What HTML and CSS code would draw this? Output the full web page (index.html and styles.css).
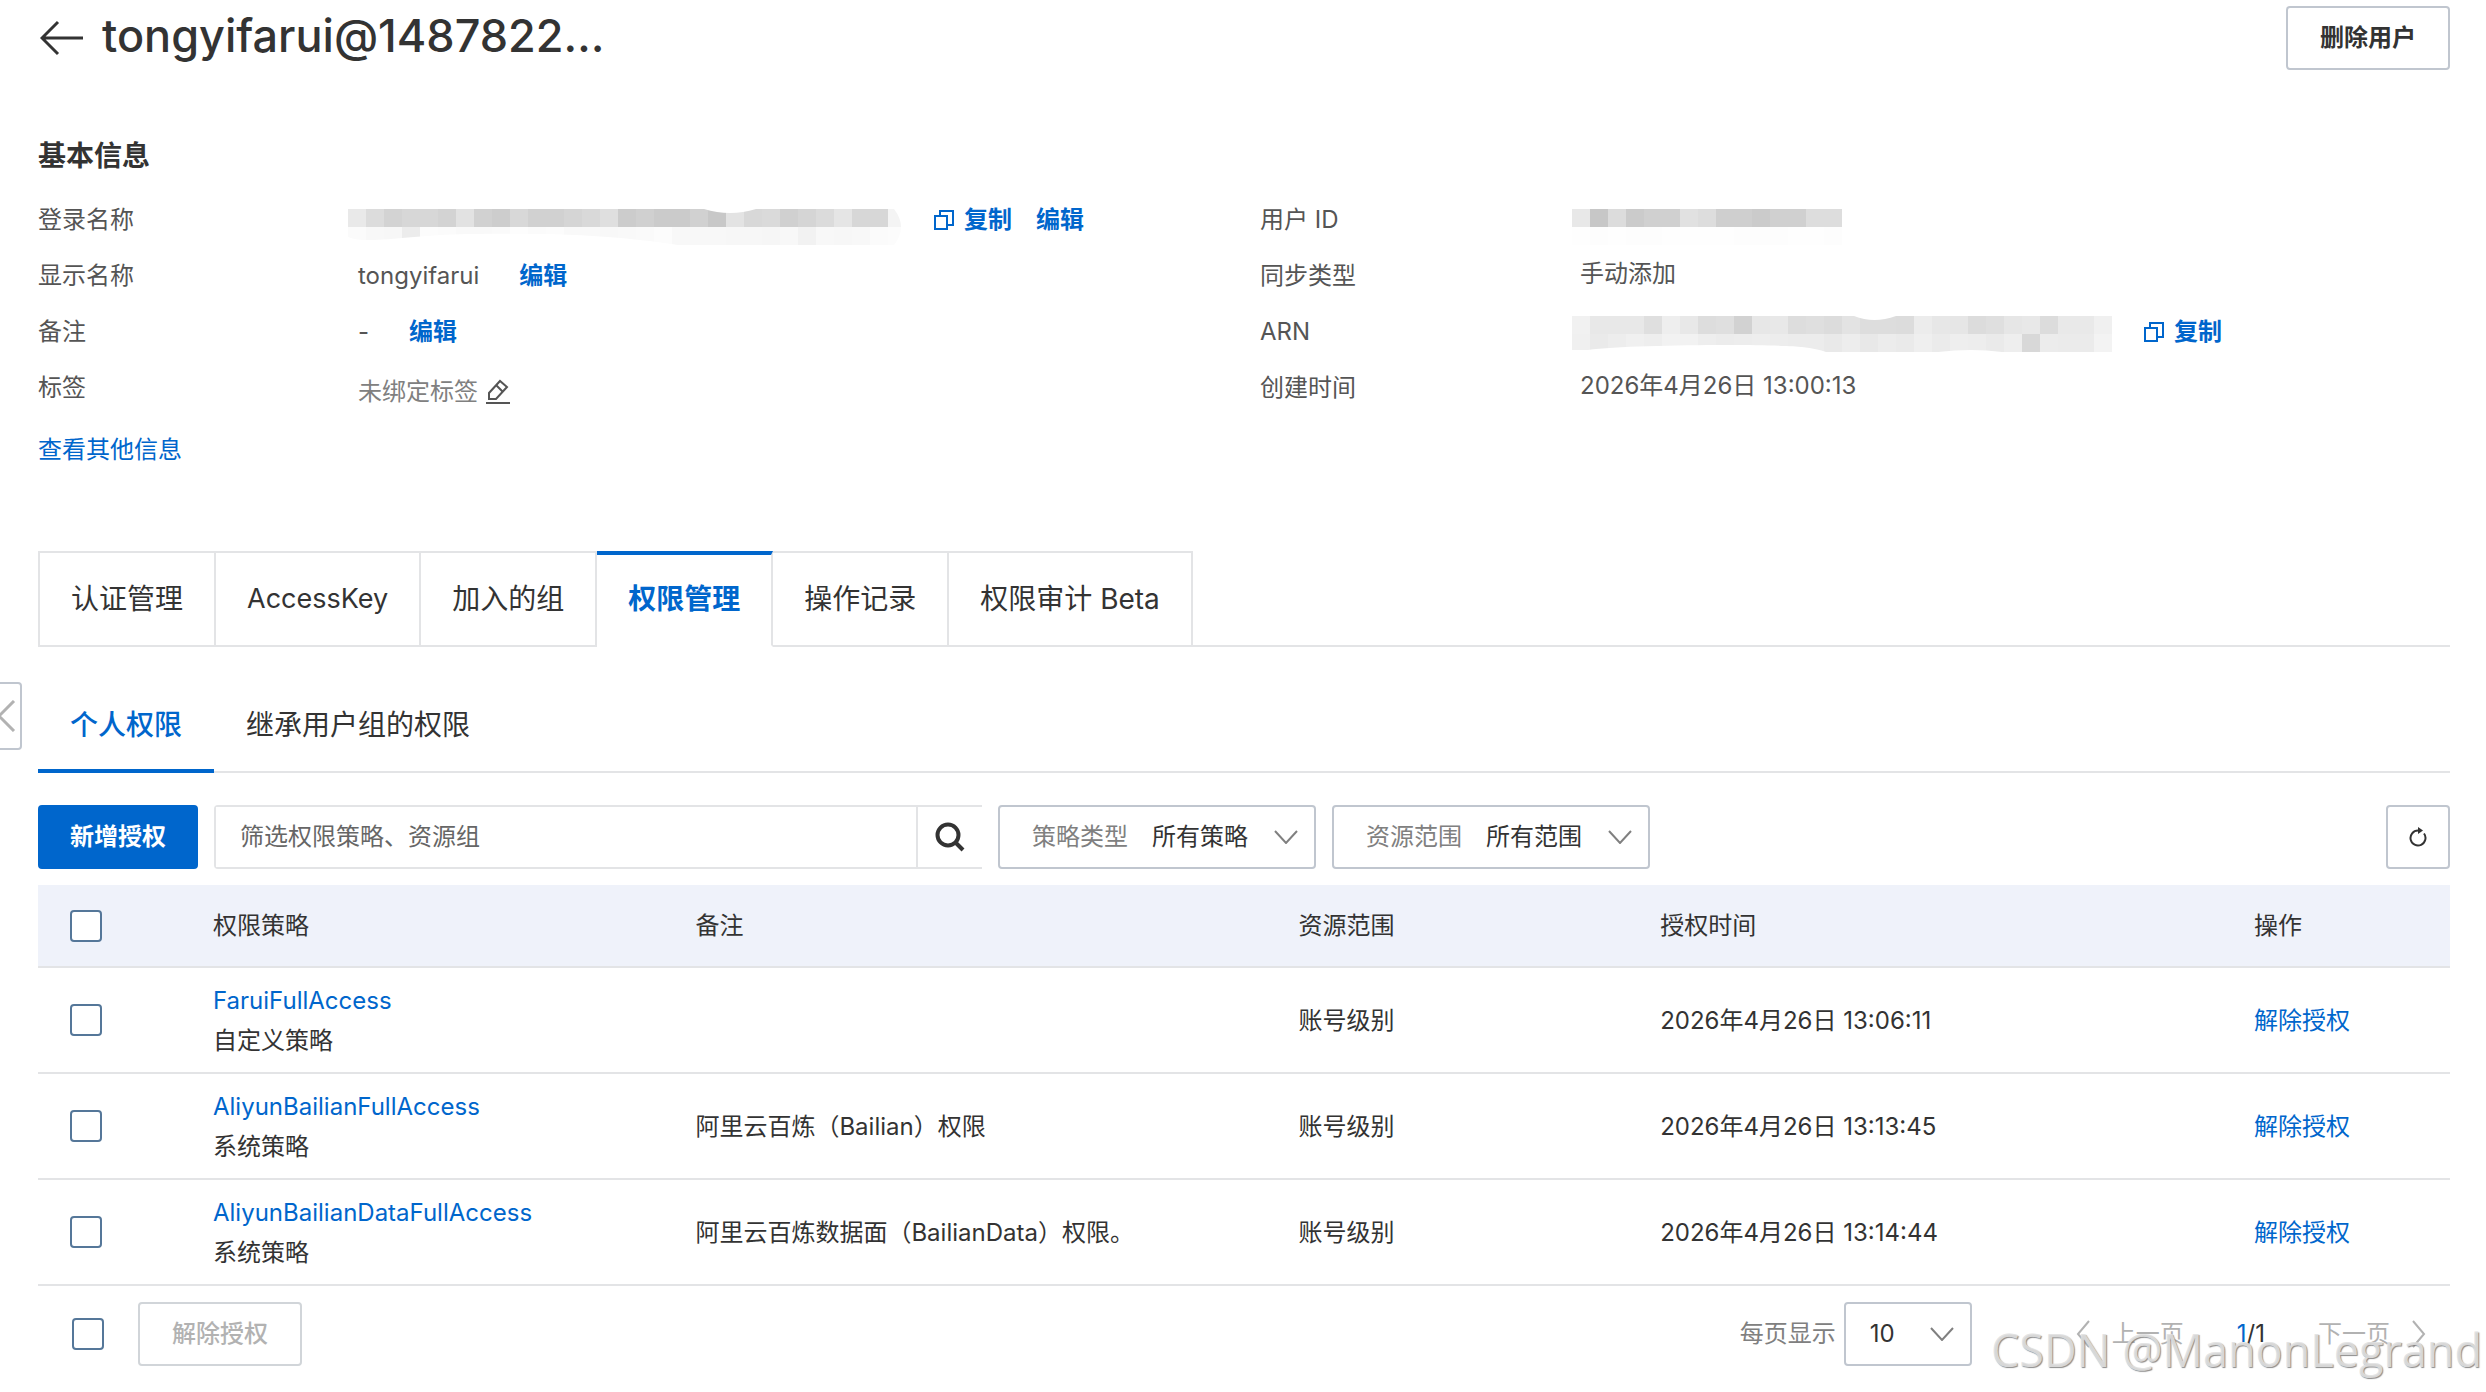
FILE: index.html
```html
<!DOCTYPE html>
<html lang="zh-CN">
<head>
    <meta charset="UTF-8">
    <meta name="viewport" content="width=device-width, initial-scale=1.0">
    <title>tongyifarui</title>
    <link rel="stylesheet" href="styles.css">
</head>
<body>

<button type="button" class="collapser" aria-label="收起">
    <svg width="20" height="32" viewBox="0 0 20 32"><path d="M14 1 L-1 16 L14 31"/></svg>
</button>

<div class="page">

    <!-- Page header -->
    <header class="page-header">
        <a href="#" class="back" aria-label="返回">
            <svg width="44" height="36" viewBox="0 0 44 36"><path d="M43 18H3M18 2L2 18L18 34"/></svg>
        </a>
        <h1>tongyifarui@1487822…</h1>
        <button type="button" class="btn">删除用户</button>
    </header>

    <!-- Basic info -->
    <section>
        <h2>基本信息</h2>
        <div class="info">
            <dl>
                <div class="info-row">
                    <dt>登录名称</dt>
                    <dd>
                        <svg class="mosaic low" id="login-mosaic" width="556" height="36"></svg>
                        <a href="#" class="copy"><svg width="20" height="20" viewBox="0 0 20 20"><path d="M1 6H13V19H1ZM6 6V1H19V15H13"/></svg>复制</a>
                        <a href="#" class="edit">编辑</a>
                    </dd>
                </div>
                <div class="info-row">
                    <dt>显示名称</dt>
                    <dd>tongyifarui <a href="#" class="edit wide">编辑</a></dd>
                </div>
                <div class="info-row">
                    <dt>备注</dt>
                    <dd>- <a href="#" class="edit wide">编辑</a></dd>
                </div>
                <div class="info-row">
                    <dt>标签</dt>
                    <dd class="tags">
                        未绑定标签
                        <button type="button" class="pencil" aria-label="编辑标签">
                            <svg width="24" height="26" viewBox="0 0 24 26"><path d="M3 20V14L14 2L21 8L10 20ZM10 6L17 13M0 24H24"/></svg>
                        </button>
                    </dd>
                </div>
            </dl>
            <dl class="right">
                <div class="info-row">
                    <dt>用户 ID</dt>
                    <dd><svg class="mosaic low" id="uid-mosaic" width="270" height="36"></svg></dd>
                </div>
                <div class="info-row">
                    <dt>同步类型</dt>
                    <dd class="plain">手动添加</dd>
                </div>
                <div class="info-row">
                    <dt>ARN</dt>
                    <dd>
                        <svg class="mosaic" id="arn-mosaic" width="540" height="36"></svg>
                        <a href="#" class="copy"><svg width="20" height="20" viewBox="0 0 20 20"><path d="M1 6H13V19H1ZM6 6V1H19V15H13"/></svg>复制</a>
                    </dd>
                </div>
                <div class="info-row">
                    <dt>创建时间</dt>
                    <dd class="plain">2026年4月26日 13:00:13</dd>
                </div>
            </dl>
        </div>
        <a href="#" class="more">查看其他信息</a>
    </section>

    <!-- Main tabs -->
    <nav class="tabs">
        <a href="#">认证管理</a>
        <a href="#" class="latin">AccessKey</a>
        <a href="#">加入的组</a>
        <a href="#" class="active">权限管理</a>
        <a href="#">操作记录</a>
        <a href="#">权限审计 Beta</a>
    </nav>

    <nav class="subtabs">
        <a href="#" class="active">个人权限</a>
        <a href="#">继承用户组的权限</a>
    </nav>

    <!-- Filters -->
    <div class="toolbar">
        <button type="button" class="btn primary">新增授权</button>
        <form class="search">
            <input type="text" placeholder="筛选权限策略、资源组" aria-label="筛选权限策略、资源组">
            <button type="submit" aria-label="搜索">
                <svg width="30" height="30" viewBox="0 0 30 30"><circle cx="13" cy="13" r="10.5"/><path d="M20 20L28 28"/></svg>
            </button>
        </form>
        <div class="select">
            <label for="policy-type">策略类型</label>
            <select id="policy-type"><option>所有策略</option></select>
            <svg width="24" height="14" viewBox="0 0 24 14"><path d="M1 1L12 13L23 1"/></svg>
        </div>
        <div class="select">
            <label for="scope">资源范围</label>
            <select id="scope"><option>所有范围</option></select>
            <svg width="24" height="14" viewBox="0 0 24 14"><path d="M1 1L12 13L23 1"/></svg>
        </div>
        <button type="button" class="btn refresh" aria-label="刷新">
            <svg width="20" height="20" viewBox="0 0 20 20"><path d="M16 6.5A7.5 7.5 0 1 1 10 3.5"/><path class="tip" d="M10 0V7L15 3.5Z"/></svg>
        </button>
    </div>

    <!-- Permission list -->
    <table>
        <colgroup>
            <col class="col-check"><col class="col-policy"><col class="col-note"><col class="col-scope"><col><col class="col-action">
        </colgroup>
        <thead>
            <tr>
                <th><input type="checkbox" aria-label="全选"></th>
                <th>权限策略</th>
                <th>备注</th>
                <th>资源范围</th>
                <th>授权时间</th>
                <th>操作</th>
            </tr>
        </thead>
        <tbody>
            <tr>
                <td><input type="checkbox" aria-label="FaruiFullAccess"></td>
                <td><a href="#">FaruiFullAccess</a><br>自定义策略</td>
                <td></td>
                <td>账号级别</td>
                <td>2026年4月26日 13:06:11</td>
                <td><a href="#">解除授权</a></td>
            </tr>
            <tr>
                <td><input type="checkbox" aria-label="AliyunBailianFullAccess"></td>
                <td><a href="#">AliyunBailianFullAccess</a><br>系统策略</td>
                <td>阿里云百炼（Bailian）权限</td>
                <td>账号级别</td>
                <td>2026年4月26日 13:13:45</td>
                <td><a href="#">解除授权</a></td>
            </tr>
            <tr>
                <td><input type="checkbox" aria-label="AliyunBailianDataFullAccess"></td>
                <td><a href="#">AliyunBailianDataFullAccess</a><br>系统策略</td>
                <td>阿里云百炼数据面（BailianData）权限。</td>
                <td>账号级别</td>
                <td>2026年4月26日 13:14:44</td>
                <td><a href="#">解除授权</a></td>
            </tr>
        </tbody>
    </table>

    <!-- Batch actions and paging -->
    <footer class="list-footer">
        <input type="checkbox" aria-label="全选">
        <button type="button" class="btn" disabled>解除授权</button>
        <label class="size-label" for="page-size">每页显示</label>
        <div class="select size">
            <select id="page-size"><option>10</option></select>
            <svg width="24" height="14" viewBox="0 0 24 14"><path d="M1 1L12 13L23 1"/></svg>
        </div>
        <div class="pager">
            <button type="button" disabled><svg width="14" height="28" viewBox="0 0 14 28"><path d="M13 1L2 14L13 27"/></svg>上一页</button>
            <span class="count"><b>1</b>/1</span>
            <button type="button" disabled>下一页<svg width="14" height="28" viewBox="0 0 14 28"><path d="M1 1L12 14L1 27"/></svg></button>
        </div>
    </footer>

</div>

<div class="watermark">CSDN @ManonLegrand</div>

<script>
    // Grey levels of the hidden values, one per 18px cell
    const mosaics = {
        'login-mosaic': [
            'e9 dc d3 d7 d7 d3 e2 d1 cd d8 d1 d1 d5 d9 df cc d0 cb cb d1 c8 e3 d8 da d0 d5 db e5 d7 d7 f4',
            'fb f8 f7 ec fc fb f9 f9 fa fd fb fc f9 f9 f8 f9 fa fc f8 f8 f8 f7 f7 f6 f8 f2 f8 f7 f8 fb fc'
        ],
        'uid-mosaic': [
            'e8 c7 dc cb d0 d0 e1 dd cf cf cb d0 d0 dd dd',
            'fe fd fe fd fd fe fe fe fe fd fd fd fe fe fd'
        ],
        'arn-mosaic': [
            'f1 e8 e8 e8 df ee e8 dd df d2 e7 e8 dd df dc e3 dd dd dc ec e7 e6 dc df e6 e8 dc e9 e9 f0',
            'f0 ea ed f0 ee f2 f2 ee ec ed ee ed ec ec e9 ed e8 ec ea ef eb ee ed ea ee d8 ec eb eb f3'
        ]
    };

    // White brush strokes that eat into the mosaic edges
    const brushes = {
        'login-mosaic': 'M0 28C20 36 60 26 120 25C240 23 290 30 330 36H0ZM356 0H408Q382 8 356 0ZM556 0V36H546Q560 18 546 0Z',
        'arn-mosaic': 'M0 34H16C60 28 210 28 230 31Q246 33 254 36H0ZM282 0H324Q302 8 282 0ZM366 36Q400 32 430 36Z'
    };

    for (const id in mosaics) {
        const cells = mosaics[id].map((line, y) => line.split(' ').map((g, x) =>
            `<rect x="${x * 18}" y="${y * 18}" width="18" height="18" fill="#${g + g + g}"/>`
        ).join('')).join('');
        const brush = brushes[id] ? `<path d="${brushes[id]}" fill="#fff"/>` : '';
        document.getElementById(id).innerHTML = cells + brush;
    }
</script>

</body>
</html>
```
FILE: styles.css
```css
* {
    box-sizing: border-box;
}
body {
    margin: 0;
    background-color: #fff;
    color: #333;
    font-family: Inter, "Noto Sans CJK SC", sans-serif;
    font-size: 24px;
    line-height: 40px;
}
a {
    color: #0066cc;
    text-decoration: none;
}
button, input, select {
    font: inherit;
    color: inherit;
    margin: 0;
}
button {
    cursor: pointer;
}
svg {
    fill: none;
    stroke: currentColor;
    stroke-width: 2;
    flex-shrink: 0;
}
.page {
    padding: 6px 36px 0 38px;
}

/* header */
.page-header {
    display: flex;
    align-items: center;
}
.back {
    display: flex;
    margin-left: 2px;
    color: #333;
}
.back svg {
    stroke-width: 3;
}
h1 {
    margin: 0 auto 0 18px;
    padding-bottom: 4px;
    font-size: 45px;
    font-weight: 500;
    line-height: 60px;
}
.btn {
    height: 64px;
    padding: 0 32px;
    border: 2px solid #c0c6cf;
    border-radius: 4px;
    background-color: #fff;
    font-weight: 600;
}
.btn.primary {
    padding: 0 30px;
    border-color: #0066cc;
    background-color: #0066cc;
    color: #fff;
}
.btn:disabled {
    border-color: #d1d5d9;
    color: #b2b2b2;
    font-weight: 500;
}

/* basic info */
h2 {
    margin: 66px 0 0;
    font-size: 28px;
    font-weight: 600;
    line-height: 40px;
}
.info {
    display: grid;
    grid-template-columns: 1fr 1fr;
    gap: 32px;
    margin-top: 16px;
    color: #555;
}
.info dl {
    margin: 0;
}
.info-row {
    display: flex;
    height: 56px;
    align-items: center;
}
.info-row dt {
    width: 320px;
}
.info-row dd {
    display: flex;
    align-items: center;
    margin: 0;
}
.info-row .plain {
    padding-bottom: 4px;
}
.mosaic {
    margin: 4px 0 0 -10px;
    stroke: none;
}
.mosaic.low {
    margin-top: 14px;
}
.copy, .edit {
    display: flex;
    align-items: center;
    gap: 10px;
    margin-left: 24px;
    font-weight: 600;
}
.copy {
    margin-left: 30px;
}
.right .mosaic {
    margin-left: -8px;
}
.right .copy {
    margin-left: 32px;
}
.edit.wide {
    margin-left: 40px;
}
.info-row .tags {
    padding-top: 8px;
    color: #808080;
}
.pencil {
    display: flex;
    margin-left: 8px;
    padding: 0;
    border: none;
    background: none;
    color: #555;
}
.more {
    display: block;
    width: fit-content;
    margin-top: 14px;
}

/* tabs */
.tabs {
    display: flex;
    margin-top: 81px;
    font-size: 28px;
    box-shadow: inset 0 -2px #e3e4e6;
}
.tabs a {
    padding: 26px 31px;
    border: 2px solid #e3e4e6;
    border-left-width: 0;
    color: #333;
}
.tabs a:first-child {
    border-left-width: 2px;
}
.tabs a.latin {
    font-size: 27px;
}
.tabs a.active {
    padding-top: 24px;
    border-top: 4px solid #0066cc;
    border-bottom-color: #fff;
    color: #0066cc;
    font-weight: 600;
}
.subtabs {
    display: flex;
    margin-top: 54px;
    font-size: 28px;
    box-shadow: inset 0 -2px #e3e4e6;
}
.subtabs a {
    padding: 4px 32px 24px;
    border-bottom: 4px solid transparent;
    color: #333;
}
.subtabs a.active {
    border-color: #0066cc;
    color: #0066cc;
    font-weight: 500;
}

/* filters */
.toolbar {
    display: flex;
    gap: 16px;
    margin: 32px 0 16px;
}
.search {
    display: flex;
    width: 768px;
    height: 64px;
    border: 2px solid #e3e4e6;
    border-right: none;
    border-radius: 4px 0 0 4px;
}
.search input {
    flex: 1;
    padding: 0 24px;
    border: none;
    outline: none;
}
.search input::placeholder {
    color: #666;
    opacity: 1;
}
.search button {
    display: flex;
    align-items: center;
    justify-content: center;
    width: 66px;
    padding: 0;
    border: none;
    border-left: 2px solid #e3e4e6;
    background: none;
}
.search svg {
    stroke-width: 4;
}
.select {
    display: flex;
    align-items: center;
    gap: 24px;
    width: 318px;
    height: 64px;
    padding: 0 16px 0 32px;
    border: 2px solid #c0c6cf;
    border-radius: 4px;
}
.select label {
    color: #808080;
}
.select select {
    flex: 1;
    min-width: 0;
    padding: 0;
    border: none;
    background: none;
    appearance: none;
    outline: none;
}
.select svg {
    color: #808080;
}
.refresh {
    display: flex;
    align-items: center;
    justify-content: center;
    width: 64px;
    margin-left: auto;
    padding: 0;
}
.refresh .tip {
    fill: #333;
    stroke: none;
}

/* table */
table {
    width: 100%;
    table-layout: fixed;
    border-collapse: separate;
    border-spacing: 0;
}
.col-check {
    width: 143px;
}
.col-policy {
    width: 20%;
}
.col-note {
    width: 25%;
}
.col-scope {
    width: 15%;
}
.col-action {
    width: 228px;
}
th, td {
    height: 106px;
    padding: 0 0 0 32px;
    border-bottom: 2px solid #e3e4e6;
    text-align: left;
    font-weight: 400;
}
td + td {
    padding-top: 2px;
}
th {
    height: 83px;
    background-color: #eff2fa;
}
input[type="checkbox"] {
    display: block;
    width: 32px;
    height: 32px;
    border: 2px solid #557799;
    border-radius: 4px;
    background-color: #fff;
    appearance: none;
}

/* footer */
.list-footer {
    display: flex;
    align-items: center;
    padding: 16px 24px 0 34px;
}
.list-footer .btn {
    margin-left: 34px;
}
.size-label {
    margin: 0 8px 0 auto;
    color: #808080;
}
.select.size {
    width: 128px;
    padding-left: 24px;
}
.pager {
    display: flex;
    align-items: center;
    margin-left: 104px;
}
.pager button {
    display: flex;
    align-items: center;
    gap: 22px;
    padding: 0;
    border: none;
    background: none;
    color: #b2b2b2;
}
.count {
    margin: 0 53px;
}
.count b {
    color: #0066cc;
    font-weight: 400;
}

.collapser {
    position: absolute;
    top: 682px;
    left: 0;
    display: flex;
    align-items: center;
    width: 22px;
    height: 68px;
    padding: 0;
    border: 2px solid #c0c6cf;
    border-left: none;
    border-radius: 0 4px 4px 0;
    background-color: #fff;
    color: #b2b2b2;
}
.collapser svg {
    stroke-width: 3;
}
.watermark {
    position: absolute;
    right: 4px;
    bottom: 10px;
    color: rgba(226, 226, 226, 0.9);
    font-family: "Open Sans", sans-serif;
    font-size: 45px;
    line-height: 64px;
    text-shadow: 1px 1px 1px rgba(110, 110, 110, 0.8);
    pointer-events: none;
}
```
